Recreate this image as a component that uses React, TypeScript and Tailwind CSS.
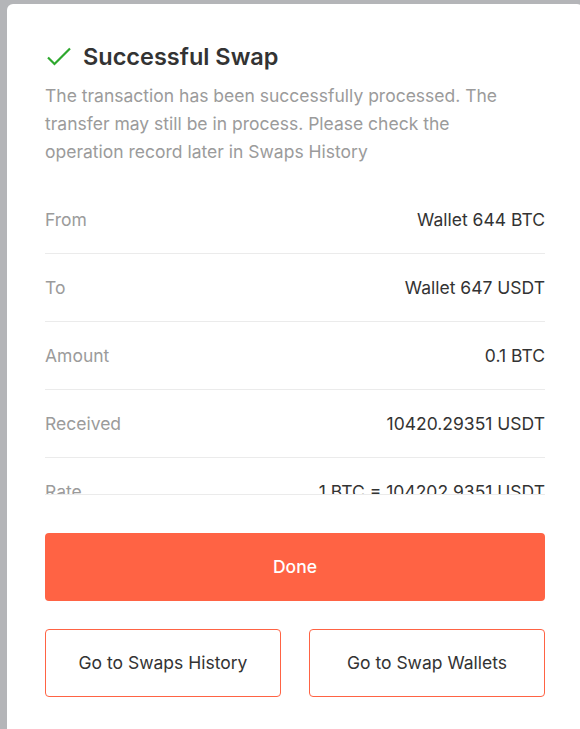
import React from 'react';

const rows = [
  { label: 'From', value: 'Wallet 644 BTC' },
  { label: 'To', value: 'Wallet 647 USDT' },
  { label: 'Amount', value: '0.1 BTC' },
  { label: 'Received', value: '10420.29351 USDT' },
  { label: 'Rate', value: '1 BTC = 104202.9351 USDT' },
];

export default function App() {
  return (
    <div
      className="h-[729px] w-[580px] overflow-hidden bg-[#b4b5b8] pl-[7px] pt-[4px]"
      style={{ fontFamily: 'Inter, "Noto Sans", sans-serif' }}
    >
      <div className="h-[760px] w-[576px] rounded-[6px] bg-white px-[38px] pt-[38px]">
        <div className="flex items-center">
          <svg width="26" height="26" viewBox="0 0 26 26" className="ml-[1px]" fill="none">
            <path d="M2 13.5 L8.5 20 L24 4.5" stroke="#2ea82e" strokeWidth="2.2" />
          </svg>
          <h1 className="ml-[11px] text-[23.5px] font-semibold leading-[30px] text-[#333]">Successful Swap</h1>
        </div>
        <p className="mt-[10px] max-w-[475px] text-[17.5px] leading-[28px] text-[#9b9b9b]">
          The transaction has been successfully processed. The transfer may still be in process. Please check the operation record later in Swaps History
        </p>

        <div className="mt-[20px] h-[309px] overflow-hidden border-b border-[#ebebeb]">
          {rows.map((r) => (
            <div
              key={r.label}
              className="flex h-[68px] items-center justify-between border-b border-[#ebebeb] pt-[2px] text-[17.5px]"
            >
              <span className="text-[#9b9b9b]">{r.label}</span>
              <span className="text-[#333]">{r.value}</span>
            </div>
          ))}
        </div>

        <button className="mt-[38px] flex h-[68px] w-full items-center justify-center rounded-[4px] bg-[#ff6344] text-[17.5px] font-medium text-white">
          Done
        </button>

        <div className="mt-[28px] grid grid-cols-2 gap-[28px]">
          <button className="h-[68px] rounded-[4px] border border-[#ff6344] text-[17.5px] text-[#333]">
            Go to Swaps History
          </button>
          <button className="h-[68px] rounded-[4px] border border-[#ff6344] text-[17.5px] text-[#333]">
            Go to Swap Wallets
          </button>
        </div>
      </div>
    </div>
  );
}
